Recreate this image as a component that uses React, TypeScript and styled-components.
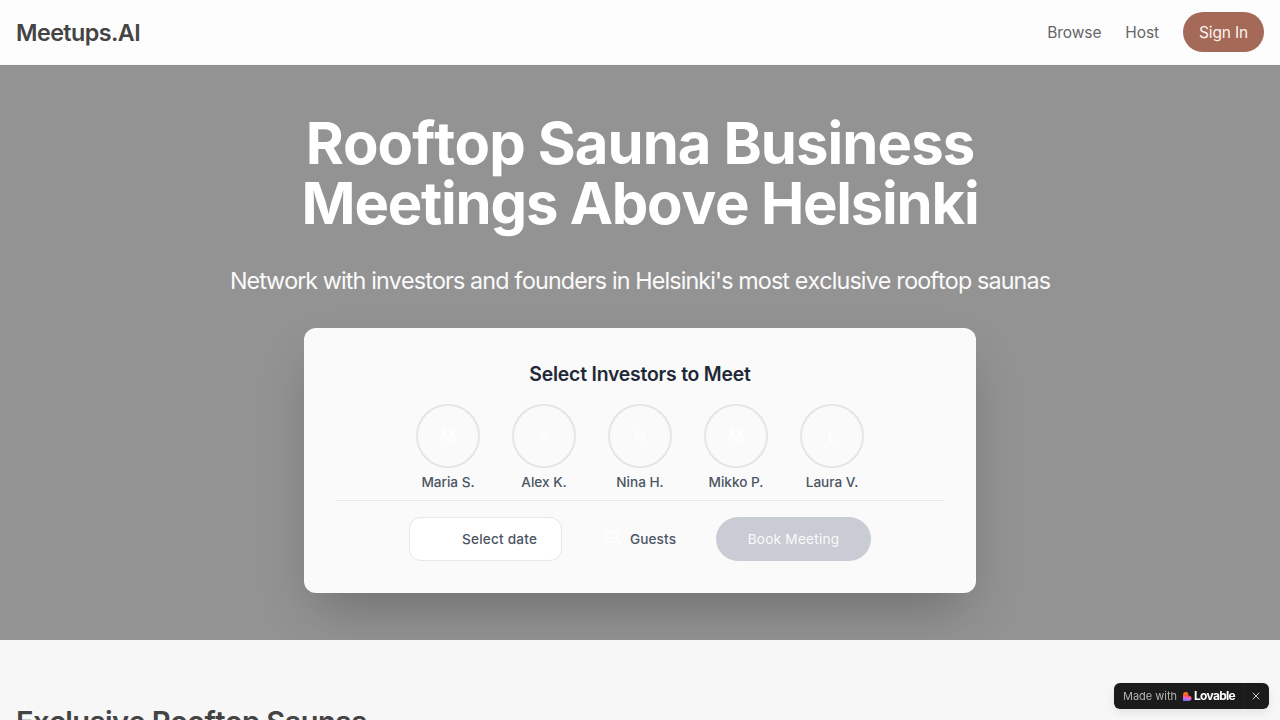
import React from 'react';
import styled, { createGlobalStyle } from 'styled-components';
import { Users, X } from 'lucide-react';

const investors = ['Maria S.', 'Alex K.', 'Nina H.', 'Mikko P.', 'Laura V.'];

const App = () => {
    return (
        <Page>
            <GlobalStyle />
            <Header>
                <Logo>Meetups.AI</Logo>
                <Nav>
                    <NavLink>Browse</NavLink>
                    <NavLink>Host</NavLink>
                    <SignInButton>Sign In</SignInButton>
                </Nav>
            </Header>
            <Hero>
                <Title>
                    <TitleLine $spacing={-0.93}>Rooftop Sauna Business</TitleLine>
                    <TitleLine $spacing={-1.22}>Meetings Above Helsinki</TitleLine>
                </Title>
                <Subtitle>
                    Network with investors and founders in Helsinki's most exclusive rooftop saunas
                </Subtitle>
                <Card>
                    <CardTitle>Select Investors to Meet</CardTitle>
                    <Investors>
                        {investors.map((name) => (
                            <Investor key={name}>
                                <Avatar>{name[0]}</Avatar>
                                <InvestorName>{name}</InvestorName>
                            </Investor>
                        ))}
                    </Investors>
                    <Controls>
                        <DateButton>Select date</DateButton>
                        <Guests>
                            <Users size={20} color="#fefefe" />
                            Guests
                        </Guests>
                        <BookButton disabled>Book Meeting</BookButton>
                    </Controls>
                </Card>
            </Hero>
            <Section>
                <SectionTitle>Exclusive Rooftop Saunas</SectionTitle>
            </Section>
            <Badge>
                <BadgeText>Made with</BadgeText>
                <LovableMark />
                <BadgeBrand>Lovable</BadgeBrand>
                <BadgeClose>
                    <X size={12} strokeWidth={2} />
                </BadgeClose>
            </Badge>
        </Page>
    );
};

export default App;

const LovableMark = () => (
    <svg width="9" height="9" viewBox="0 0 24 24">
        <defs>
            <linearGradient id="heart" x1="0.6" y1="0" x2="0.4" y2="1">
                <stop offset="0.15" stopColor="#ff7a1a" />
                <stop offset="0.42" stopColor="#ff4f3a" />
                <stop offset="0.68" stopColor="#f064d8" />
                <stop offset="1" stopColor="#5a78ff" />
            </linearGradient>
        </defs>
        <path
            d="M7.2 0a7.2 7.2 0 0 1 7.2 7.2v2.7h2.4a7.1 7.1 0 0 1 0 14.1H0V7.2A7.2 7.2 0 0 1 7.2 0z"
            fill="url(#heart)"
        />
    </svg>
);

const GlobalStyle = createGlobalStyle`
    * {
        box-sizing: border-box;
    }

    body {
        margin: 0;
        overflow: hidden;
        font-family: Inter, sans-serif;
        font-optical-sizing: none;
        -webkit-font-smoothing: antialiased;
    }

    h1, h2, h3, p {
        margin: 0;
    }

    button {
        padding: 0;
        border: none;
        font-family: inherit;
    }
`;

const Page = styled.div`
    height: 720px;
    overflow: hidden;
    background-color: #f7f7f7;
`;

const Header = styled.header`
    display: flex;
    align-items: center;
    justify-content: space-between;
    height: 65px;
    padding: 0 16px;
    background-color: #fdfdfd;
    border-bottom: 1px solid #f7f7f7;
`;

const Logo = styled.div`
    padding-top: 2px;
    color: #444;
    font-size: 23.3px;
    font-weight: 600;
    line-height: 32px;
    letter-spacing: -0.56px;
`;

const Nav = styled.nav`
    display: flex;
    align-items: center;
    gap: 24px;
`;

const NavLink = styled.a`
    padding-top: 2px;
    color: #666;
    font-size: 15.5px;
    line-height: 24px;
    letter-spacing: -0.1px;
`;

const SignInButton = styled.button`
    width: 81px;
    height: 40px;
    border-radius: 20px;
    background-color: #a46a57;
    color: #fdf3f0;
    font-size: 15.5px;
    letter-spacing: -0.17px;
`;

const Hero = styled.section`
    display: flex;
    flex-direction: column;
    align-items: center;
    height: 575px;
    padding-top: 48px;
    overflow: hidden;
    background-color: #939393;
`;

const Title = styled.h1`
    color: #fff;
    font-size: 58px;
    font-weight: 700;
    font-kerning: none;
    line-height: 60px;
    text-align: center;
`;

const TitleLine = styled.span<{ $spacing: number }>`
    display: block;
    letter-spacing: ${({ $spacing }) => $spacing}px;
`;

const Subtitle = styled.p`
    margin: 32px 0 31px;
    color: #fafafa;
    font-size: 23.3px;
    font-weight: 400;
    font-kerning: none;
    line-height: 32px;
    letter-spacing: -0.87px;
    white-space: nowrap;
`;

const Card = styled.div`
    width: 672px;
    height: 265px;
    padding: 32px;
    border-radius: 12px;
    background-color: #fafafa;
    box-shadow: 0 25px 50px -12px rgba(0, 0, 0, 0.25);
`;

const CardTitle = styled.h3`
    color: #1f2937;
    font-size: 19.4px;
    font-weight: 600;
    line-height: 28px;
    letter-spacing: -0.21px;
    text-align: center;
`;

const Investors = styled.div`
    display: flex;
    justify-content: center;
    gap: 32px;
    padding: 16px 0 8px;
    border-bottom: 1px solid #e5e7eb;
`;

const Investor = styled.div`
    display: flex;
    flex-direction: column;
    align-items: center;
    gap: 4px;
    width: 64px;
`;

const Avatar = styled.div`
    display: flex;
    align-items: center;
    justify-content: center;
    width: 64px;
    height: 64px;
    border: 2px solid #e5e5e5;
    border-radius: 50%;
    color: #fff;
    font-size: 16px;
    font-weight: 500;
`;

const InvestorName = styled.span`
    color: #4b5563;
    font-size: 13.6px;
    font-weight: 500;
    line-height: 20px;
    white-space: nowrap;
`;

const Controls = styled.div`
    display: flex;
    justify-content: center;
    padding-top: 16px;
`;

const DateButton = styled.button`
    width: 153px;
    height: 44px;
    padding: 0 0 1px 52px;
    border: 1px solid #e5e7eb;
    border-radius: 12px;
    background-color: #fff;
    color: #4b5563;
    font-size: 13.6px;
    font-weight: 500;
    letter-spacing: 0.2px;
    text-align: left;
`;

const Guests = styled.div`
    display: flex;
    align-items: center;
    gap: 8px;
    width: 114px;
    height: 43px;
    margin-left: 40px;
    color: #4b5563;
    font-size: 13.6px;
    font-weight: 500;
    letter-spacing: 0.1px;
`;

const BookButton = styled.button`
    width: 155px;
    height: 44px;
    padding-bottom: 1px;
    border-radius: 22px;
    background-color: #c9ccd4;
    color: #fafafa;
    font-size: 13.6px;
    font-weight: 400;
    letter-spacing: 0.25px;
`;

const Section = styled.section`
    padding: 64px 16px;
`;

const SectionTitle = styled.h2`
    color: #444;
    font-size: 29.1px;
    font-weight: 600;
    font-kerning: none;
    line-height: 36px;
    letter-spacing: -0.59px;
`;

const Badge = styled.div`
    position: fixed;
    right: 11px;
    bottom: 11px;
    display: flex;
    align-items: center;
    width: 155px;
    height: 26px;
    padding-left: 9px;
    border-radius: 6px;
    background-color: #1b1b1b;
    box-shadow: 0 4px 10px rgba(0, 0, 0, 0.08);
`;

const BadgeText = styled.span`
    width: 60px;
    color: #b5b3ad;
    font-size: 11px;
    white-space: nowrap;
`;

const BadgeBrand = styled.span`
    width: 49px;
    margin-left: 2px;
    padding-bottom: 1px;
    color: #fff;
    font-size: 12px;
    font-weight: 700;
    letter-spacing: -0.7px;
`;

const BadgeClose = styled.span`
    display: flex;
    align-items: center;
    justify-content: center;
    width: 25px;
    height: 26px;
    border-left: 1px solid #222;
    color: #d0d0d0;
`;
